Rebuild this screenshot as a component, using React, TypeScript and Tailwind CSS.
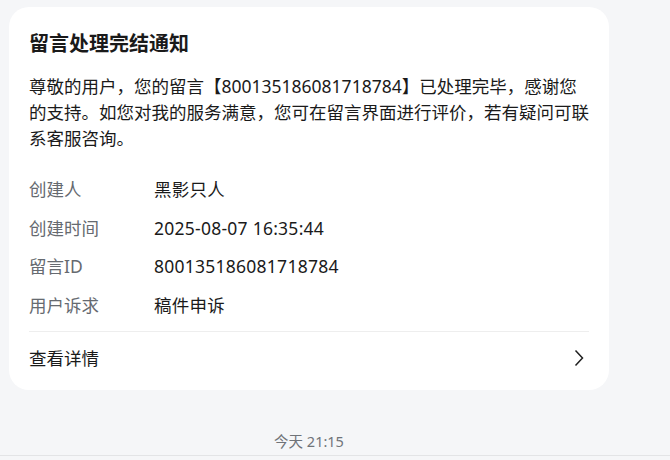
import React from 'react';

const rows = [
  { label: '创建人', value: '黑影只人' },
  { label: '创建时间', value: '2025-08-07 16:35:44' },
  { label: '留言ID', value: '800135186081718784' },
  { label: '用户诉求', value: '稿件申诉' },
];

const App: React.FC = () => {
  return (
    <div
      className="w-full h-[460px] bg-[#f5f6f8] overflow-hidden relative"
      style={{ fontFamily: '"Noto Sans", "Noto Sans CJK SC", sans-serif' }}
    >
      {/* Notice card */}
      <div className="ml-[9px] mt-[7px] w-[600px] bg-white rounded-[20px] px-[20px] pt-[23px]">
        <h2 className="text-[20px] leading-[28px] font-bold text-[#1a1a1a]">留言处理完结通知</h2>
        <p className="mt-[15px] text-[17.5px] leading-[26px] text-[#1a1a1a]">
          尊敬的用户，您的留言【800135186081718784】已处理完毕，感谢您的支持。如您对我的服务满意，您可在留言界面进行评价，若有疑问可联系客服咨询。
        </p>

        <div className="mt-[19px]">
          {rows.map((r) => (
            <div key={r.label} className="flex items-center h-[38.5px] text-[17.5px]">
              <span className="w-[125px] shrink-0 text-[#666a70]">{r.label}</span>
              <span className="text-[#1a1a1a] tracking-[0.25px]">{r.value}</span>
            </div>
          ))}
        </div>

        <div className="mt-[7px] border-t border-[#eeeeee] flex items-center justify-between pt-[13px] pb-[19px]">
          <span className="text-[17.5px] leading-[26px] text-[#1a1a1a]">查看详情</span>
          <svg width="12" height="18" viewBox="0 0 12 18" className="mr-[4px]">
            <path d="M2.5 1.5 L9.5 9 L2.5 16.5" fill="none" stroke="#1f1f1f" strokeWidth="1.5" strokeLinejoin="miter" />
          </svg>
        </div>
      </div>

      {/* Timestamp */}
      <div className="ml-[9px] w-[600px] mt-[41px] flex justify-center">
        <span className="text-[14.5px] leading-[20px] text-[#6f7378]">今天 21:15</span>
      </div>

      <div className="absolute left-0 right-0 top-[455px] border-t border-[#e3e4e6]" />
    </div>
  );
};

export default App;
